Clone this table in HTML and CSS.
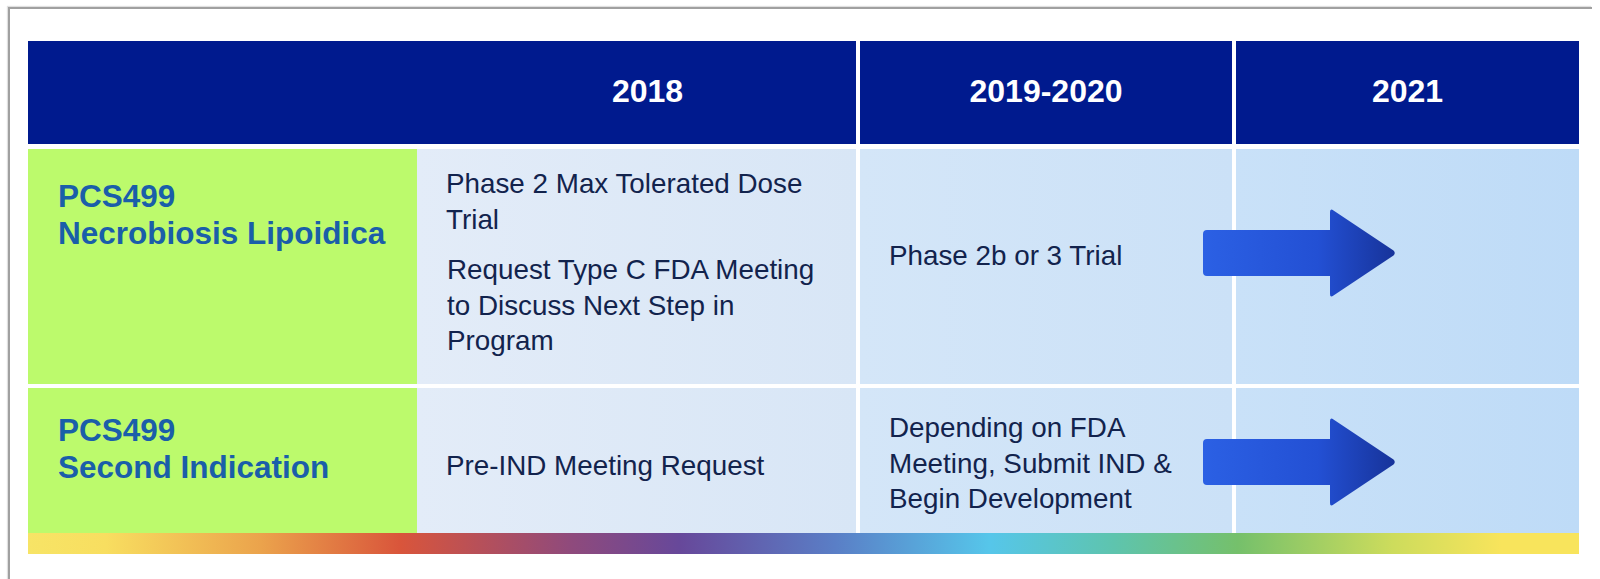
FILE: index.html
```html
<!DOCTYPE html>
<html lang="en">
<head>
<meta charset="utf-8">
<title>PCS499 Timeline</title>
<link rel="stylesheet" href="styles.css">
</head>
<body>
<div class="frame">
  <div class="timeline">
    <div class="row head">
      <div class="cell h-label"></div>
      <div class="cell h-2018">2018</div>
      <div class="cell h-2019 sep">2019-2020</div>
      <div class="cell h-2021 sep">2021</div>
    </div>

    <div class="row r1">
      <div class="cell label">PCS499<br>Necrobiosis Lipoidica</div>
      <div class="cell d2018">
        <p>Phase 2 Max Tolerated Dose<br>Trial</p>
        <p class="second">Request Type C FDA Meeting<br>to Discuss Next Step in<br>Program</p>
      </div>
      <div class="cell d2019 sep"><p>Phase 2b or 3 Trial</p></div>
      <div class="cell d2021 sep"></div>
      <svg class="arrow" viewBox="0 0 193 90" width="193" height="90" aria-hidden="true">
        <defs>
          <linearGradient id="ag1" x1="0" y1="0" x2="1" y2="0">
            <stop offset="0" stop-color="#2b60e4"/>
            <stop offset="0.6" stop-color="#2350d4"/>
            <stop offset="1" stop-color="#17339a"/>
          </linearGradient>
        </defs>
        <path d="M4,22 H127 V4 Q127,0 130.5,2.4 L190.5,42.6 Q193,45 190.5,47.4 L130.5,87.6 Q127,90 127,86 V68 H4 Q0,68 0,64 V26 Q0,22 4,22 Z" fill="url(#ag1)"/>
      </svg>
    </div>

    <div class="row r2">
      <div class="cell label">PCS499<br>Second Indication</div>
      <div class="cell d2018"><p>Pre-IND Meeting Request</p></div>
      <div class="cell d2019 sep"><p>Depending on FDA<br>Meeting, Submit IND &amp;<br>Begin Development</p></div>
      <div class="cell d2021 sep"></div>
      <svg class="arrow" viewBox="0 0 193 90" width="193" height="90" aria-hidden="true">
        <defs>
          <linearGradient id="ag2" x1="0" y1="0" x2="1" y2="0">
            <stop offset="0" stop-color="#2b60e4"/>
            <stop offset="0.6" stop-color="#2350d4"/>
            <stop offset="1" stop-color="#17339a"/>
          </linearGradient>
        </defs>
        <path d="M4,22 H127 V4 Q127,0 130.5,2.4 L190.5,42.6 Q193,45 190.5,47.4 L130.5,87.6 Q127,90 127,86 V68 H4 Q0,68 0,64 V26 Q0,22 4,22 Z" fill="url(#ag2)"/>
      </svg>
    </div>

    <div class="rainbow"></div>
  </div>
</div>
</body>
</html>
```

FILE: styles.css
```css
html, body {
  margin: 0;
  padding: 0;
  background: #ffffff;
}

body {
  width: 1600px;
  height: 579px;
  overflow: hidden;
  font-family: "Liberation Sans", Arial, sans-serif;
}

.frame {
  box-sizing: border-box;
  margin: 7px 0 0 8px;
  width: 1584px;
  height: 574px;
  border-top: 2px solid #a0a0a0;
  border-left: 2px solid #a0a0a0;
  box-shadow: -1px -1px 1px rgba(0, 0, 0, 0.12);
  padding: 32px 0 0 18px;
}

.timeline {
  width: 1551px;
  display: flex;
  flex-direction: column;
}

.row {
  position: relative;
  display: grid;
  grid-template-columns: 389px 439px 376px 347px;
}

.cell {
  box-sizing: border-box;
}

.sep {
  border-left: 4px solid #ffffff;
}

/* header */
.head {
  height: 103px;
}

.head .cell {
  background: #001a8e;
  color: #ffffff;
  font-weight: bold;
  font-size: 32px;
  display: flex;
  align-items: center;
  justify-content: center;
  padding-bottom: 2px;
}

.head .h-2018 {
  padding-left: 22px;
}

/* body rows */
.r1 {
  height: 235px;
  margin-top: 5px;
}

.r2 {
  height: 145px;
  margin-top: 4px;
}

.label {
  background: #bcfa6c;
  color: #1a5ea9;
  font-weight: bold;
  font-size: 31.5px;
  line-height: 37px;
  padding-left: 30px;
}

.r1 .label { padding-top: 29px; }
.r2 .label { padding-top: 24px; }

.d2018, .d2019 {
  color: #12234d;
  font-size: 27.8px;
  line-height: 35.5px;
  padding-left: 29px;
}

.d2019 {
  padding-left: 29px;
}

.d2018 p, .d2019 p {
  margin: 0;
}

.d2018 .second {
  margin-top: 15px;
  padding-left: 1px;
}

.d2018 {
  background: linear-gradient(90deg, #e3ecf8 0%, #d8e6f6 100%);
}

.d2019 {
  background: linear-gradient(90deg, #d4e6f8 0%, #cbe1f7 100%);
  background-clip: padding-box;
}

.d2021 {
  background: linear-gradient(90deg, #c9e1f8 0%, #bedbf7 100%);
  background-clip: padding-box;
}

.r1 .d2018 { padding-top: 17px; }
.r1 .d2019 { padding-top: 89px; }
.r2 .d2018 { padding-top: 60px; }
.r2 .d2019 { padding-top: 22px; }

/* overlay arrows spanning the column divider */
.arrow {
  position: absolute;
  left: 1175px;
  display: block;
}

.r1 .arrow { top: 59px; }
.r2 .arrow { top: 29px; }

.rainbow {
  height: 21px;
  background: linear-gradient(90deg,
    #f7e466 0%,
    #f8de60 5%,
    #eba34c 15%,
    #d9553b 24%,
    #8f4a7c 35%,
    #67489a 42%,
    #5a7ec6 52%,
    #56c6ea 62%,
    #5ec4ae 70%,
    #75c06b 78%,
    #cddc5c 88%,
    #f8e45c 95%,
    #f8e45c 100%);
}
```
